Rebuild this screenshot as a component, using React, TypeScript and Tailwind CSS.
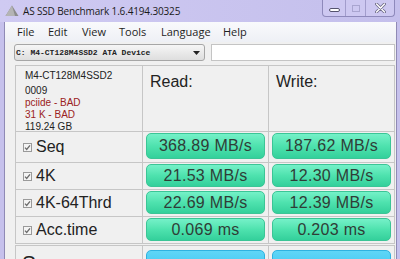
import React from 'react';

const SANS = "font-['Liberation_Sans',Arial,sans-serif]";
const UI = "font-['Open_Sans','Noto_Sans',sans-serif]";

function Check() {
  return (
    <svg width="9" height="9" viewBox="0 0 9 9" className="shrink-0">
      <rect x="0.5" y="0.5" width="8" height="8" fill="#f4f4f4" stroke="#9a9a9a" />
      <path d="M2 4.6 L3.7 6.4 L7 2.4" fill="none" stroke="#6a6a6a" strokeWidth="1.3" />
    </svg>
  );
}

function Val({ v, pb = 'pb-[2px]' }: { v: string; pb?: string }) {
  return (
    <div className={`bg-[#f0f0f0] px-[3px] pt-[1px] ${pb} flex`}>
      <div className="flex-1 rounded-[5px] border border-[#3bc596] bg-linear-to-b from-[#74f1c8] via-[#4ee2ae] to-[#33d09b] flex items-center justify-center text-[16px] tracking-[0.3px] text-[#2f3d37]">
        {v}
      </div>
    </div>
  );
}

function Label({ t }: { t: string }) {
  return (
    <div className="bg-[#f0f0f0] flex items-center gap-[4px] pl-[7px] text-[16px] text-[#222]">
      <Check />
      <span>{t}</span>
    </div>
  );
}

const rows = [
  { t: 'Seq', r: '368.89 MB/s', w: '187.62 MB/s', pb: 'pb-[3px]' },
  { t: '4K', r: '21.53 MB/s', w: '12.30 MB/s' },
  { t: '4K-64Thrd', r: '22.69 MB/s', w: '12.39 MB/s' },
  { t: 'Acc.time', r: '0.069 ms', w: '0.203 ms' },
];

export default function App() {
  return (
    <div className="w-[400px] h-[259px] overflow-hidden bg-[#c6c1ec] flex flex-col">
      {/* title bar */}
      <div className="h-[22px] flex items-start shrink-0 bg-linear-to-r from-[#cfcaf2] to-[#c4bfec]">
        <svg width="14" height="12" viewBox="0 0 14 12" className="ml-[5px] mt-[5px] shrink-0">
          <path d="M7 0.5 L13.5 11 L0.5 11 Z" fill="#8c8c8c" />
          <path d="M7 0.5 L10 11 L0.5 11 Z" fill="#b4b4b4" />
        </svg>
        <span className={`${UI} ml-[4px] mt-[4px] text-[10px] tracking-[-0.15px] text-[#1a1a1a] whitespace-nowrap`}>
          AS SSD Benchmark 1.6.4194.30325
        </span>
        <div className="ml-auto mr-[5px] flex h-[17px] shrink-0 border border-t-0 border-[#8e89bb] rounded-b-[4px] bg-[#cdc8f1]">
          <div className="w-[23px] flex items-center justify-center border-r border-[#a29dcc]">
            <div className="w-[11px] h-[4px] mt-[4px] rounded-[2px] bg-white border border-[#55536e]" />
          </div>
          <div className="w-[20px] flex items-center justify-center border-r border-[#a29dcc]">
            <div className="w-[8px] h-[7px] border border-[#a9a5d0]" />
          </div>
          <div className="w-[28px] flex items-center justify-center">
            <svg width="11" height="10" viewBox="0 0 11 10">
              <path d="M1.5 1 L9.5 9 M9.5 1 L1.5 9" stroke="#6d6a88" strokeWidth="3" strokeLinecap="round" />
              <path d="M1.5 1 L9.5 9 M9.5 1 L1.5 9" stroke="#ffffff" strokeWidth="1.4" strokeLinecap="round" />
            </svg>
          </div>
        </div>
      </div>

      <div className="flex flex-1 min-h-0">
        <div className="w-[5px] border-r border-[#8f8ab5] shrink-0" />
        <div className="flex-1 bg-[#f0f0f0] flex flex-col overflow-hidden">
          {/* menu */}
          <div className={`${UI} h-[20px] shrink-0 bg-linear-to-b from-[#f9fafc] to-[#eef0f5] flex items-center pl-[12px] text-[11px] text-[#1e1e1e]`}>
            <span className="w-[31px] shrink-0">File</span>
            <span className="w-[34px] shrink-0">Edit</span>
            <span className="w-[37px] shrink-0">View</span>
            <span className="w-[42px] shrink-0">Tools</span>
            <span className="w-[62px] shrink-0">Language</span>
            <span className="shrink-0">Help</span>
          </div>

          {/* drive selector */}
          <div className="flex shrink-0 mt-[2px] h-[17px] pl-[9px] pr-[1px] gap-[6px]">
            <div className="w-[191px] rounded-[3px] border border-[#a6a6a6] bg-linear-to-b from-[#f6f6f6] to-[#dedede] flex items-center pl-[1px] pr-[4px]">
              <span className="font-['Liberation_Mono',monospace] text-[8px] font-bold text-[#222] whitespace-nowrap">
                C: M4-CT128M4SSD2 ATA Device
              </span>
              <svg width="7" height="4" viewBox="0 0 7 4" className="ml-auto">
                <path d="M0 0 L7 0 L3.5 4 Z" fill="#222" />
              </svg>
            </div>
            <div className="flex-1 border border-[#c4c4c4] bg-white" />
          </div>

          {/* results table */}
          <div className={`${SANS} shrink-0 ml-[10px] mt-[4px] w-[380px] grid grid-cols-[126px_125px_125px] grid-rows-[65px_30px_26px_26px_26px] gap-px bg-[#c6c6c6] border border-[#c6c6c6]`}>
            <div className="bg-[#f0f0f0] pl-[9px] pt-[4px] text-[10px] leading-[12px] text-[#222]">
              <div className="mb-[3px]">M4-CT128M4SSD2</div>
              <div>0009</div>
              <div className="text-[#9b2222]">pciide - BAD</div>
              <div className="text-[#9b2222]">31 K - BAD</div>
              <div>119.24 GB</div>
            </div>
            <div className="bg-[#f0f0f0] pl-[7px] pt-[4px] text-[16px] text-[#222]">Read:</div>
            <div className="bg-[#f0f0f0] pl-[7px] pt-[4px] text-[16px] text-[#222]">Write:</div>
            {rows.map((r) => (
              <React.Fragment key={r.t}>
                <Label t={r.t} />
                <Val v={r.r} pb={r.pb} />
                <Val v={r.w} pb={r.pb} />
              </React.Fragment>
            ))}
          </div>

          {/* score */}
          <div className={`${SANS} shrink-0 ml-[10px] mt-px w-[380px] grid grid-cols-[126px_125px_125px] gap-px bg-[#c6c6c6] border border-[#c6c6c6]`}>
            <div className="bg-[#f0f0f0] pl-[6px] pt-[1px] text-[21px] text-[#222] h-[30px]">Score:</div>
            <div className="bg-[#f0f0f0] px-[3px] pt-[4px]">
              <div className="h-[26px] rounded-[5px] border border-[#2fb2e0] bg-linear-to-b from-[#5fd6f7] to-[#33c2ef] text-center text-[20px] pt-[2px] text-[#2a3a40]">81</div>
            </div>
            <div className="bg-[#f0f0f0] px-[3px] pt-[4px]">
              <div className="h-[26px] rounded-[5px] border border-[#2fb2e0] bg-linear-to-b from-[#5fd6f7] to-[#33c2ef] text-center text-[20px] pt-[2px] text-[#2a3a40]">43</div>
            </div>
          </div>
        </div>
        <div className="w-[4px] border-l border-[#8f8ab5] shrink-0" />
      </div>
    </div>
  );
}
